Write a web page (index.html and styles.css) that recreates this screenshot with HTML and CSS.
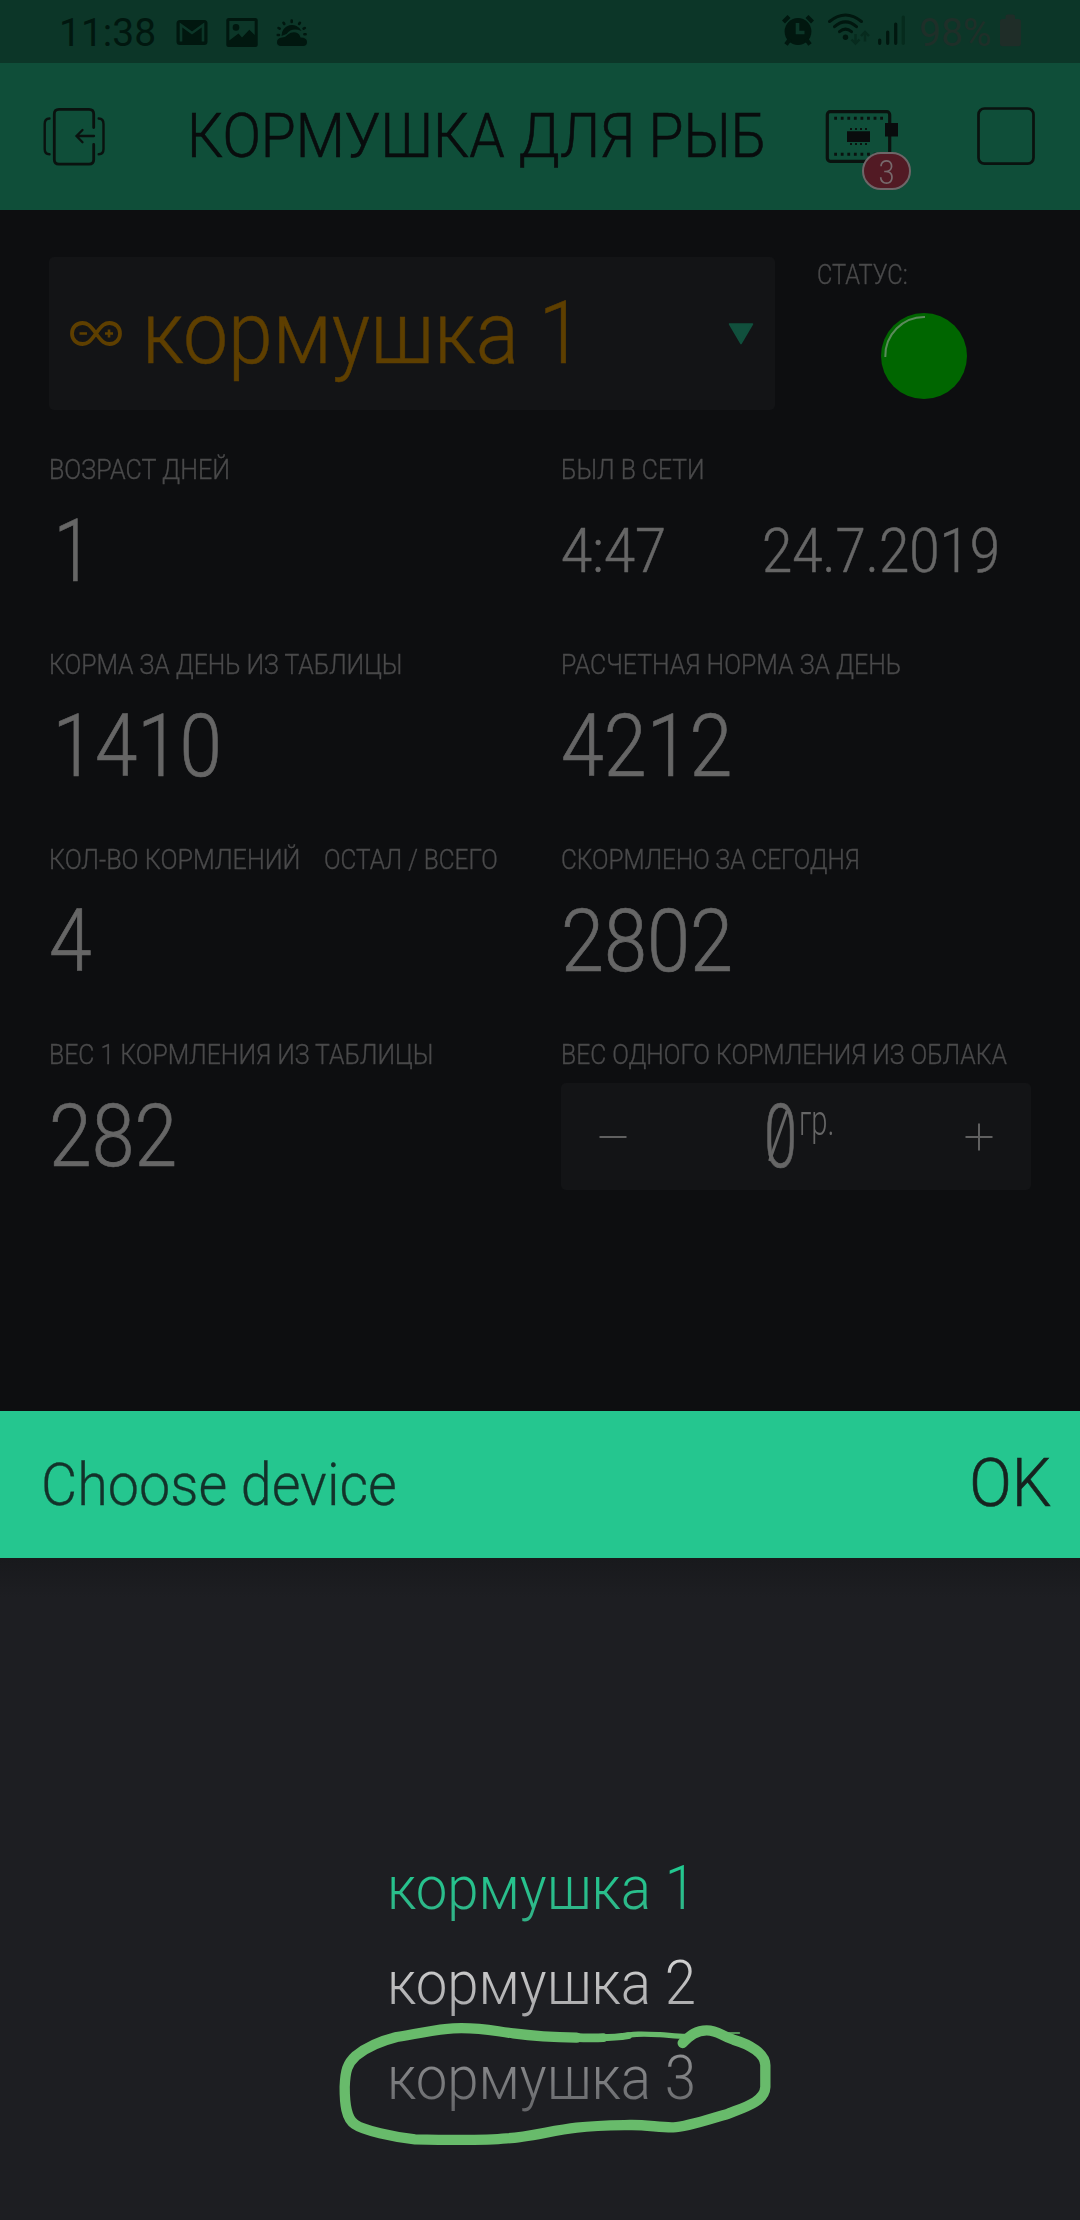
FILE: index.html
```html
<!DOCTYPE html>
<html lang="ru">
<head>
<meta charset="utf-8">
<title>Кормушка для рыб</title>
<link rel="stylesheet" href="styles.css">
</head>
<body>
<div class="screen">
  <header class="status-bar">
    <span class="clock fit">11:38</span>
    <div class="notifications">
      <svg width="32" height="63" viewBox="176 0 32 63">
        <rect x="176.5" y="20" width="31" height="25" rx="3.5" fill="#01170f"/>
        <path d="M181 41.500V25L192 33L203 25V41.500" fill="none" stroke="#0c3628" stroke-width="2.600"/>
      </svg>
      <svg width="32" height="63" viewBox="226 0 32 63">
        <rect x="226.300" y="18" width="31.400" height="29" rx="2.500" fill="#01170f"/>
        <path d="M229.300 21H254.700V35L249.300 29.800L242 37.500L238.500 33.500L229.300 40.500Z" fill="#0c3628"/>
        <circle cx="236" cy="27.400" r="3.300" fill="#01170f"/>
      </svg>
      <svg width="32" height="63" viewBox="276 0 32 63">
        <g fill="none" stroke="#01170f" stroke-width="2.600" stroke-linecap="round">
          <path d="M291.700 20.500V22M283.500 22.800L284.300 24M299.900 22.800L299.100 24M278.500 28L279.700 28.700M304.800 28L303.600 28.700M277.800 35H279M305.600 34.300H304.400"/>
        </g>
        <path d="M281.500 36A10.500 10.500 0 0 1 301.500 31Q292 27 286.500 34Q284 35 281.500 36Z" fill="#01170f"/>
        <path d="M281 46Q277 46 277 42.200Q277 38 282 37.500Q286 37 288 34.500Q291.500 31.500 296 32.500Q299.500 33.500 300.500 37.500Q307 37.500 307 42Q307 46 303 46Z" fill="#01170f" stroke="#0c3628" stroke-width="1.500" paint-order="stroke"/>
      </svg>
    </div>
    <div class="system">
      <svg width="33" height="63" viewBox="782 0 33 63">
        <circle cx="798" cy="33.500" r="13.400" fill="#01170f"/>
        <path d="M783.500 24L789 18.500M812.500 24L807 18.500M790 41L786 46.500M806 41L810 46.500" stroke="#01170f" stroke-width="4.200"/>
        <path d="M797.500 25V34.500H804.500" fill="none" stroke="#0c3628" stroke-width="3.600"/>
      </svg>
      <svg width="43" height="63" viewBox="827 0 43 63">
        <g fill="none" stroke="#01170f" stroke-width="3" stroke-linecap="round">
          <path d="M829.500 23.500Q845.500 10.500 861.500 23.500M834.500 28.700Q845.500 19 856.500 28.700M839.500 33.700Q845.500 28.500 851.500 33.700"/>
        </g>
        <circle cx="845.500" cy="39.300" r="2.700" fill="#01170f"/>
        <path d="M855.500 36V45.500M851.500 41.500L855.500 45.500L859.500 41.500M865 43.500V34M861 38L865 34L869 38" fill="none" stroke="#072b1e" stroke-width="2.400"/>
      </svg>
      <svg width="27" height="63" viewBox="878 0 27 63">
        <g stroke="#01170f" stroke-width="3.200" stroke-linecap="round"><path d="M879.700 42V45.300M887.700 34V45.300M895.700 26V45.300"/><path d="M903.300 19V45.300" stroke="#062b1d"/></g>
      </svg>
      <span class="battery-level fit">98%</span>
      <svg width="21" height="63" viewBox="1000 0 21 63">
        <path d="M1005.500 21V18.500Q1005.500 16.500 1007.500 16.500H1013Q1015 16.500 1015 18.500V21H1018.500Q1021 21 1021 23.500V46Q1021 48.300 1018.500 48.300H1002.500Q1000 48.300 1000 46V23.500Q1000 21 1002.500 21Z" fill="#1f2d28"/>
      </svg>
    </div>
  </header>

  <div class="app-bar">
    <svg width="62" height="147" viewBox="43 63 62 147" fill="none" stroke="#0a120f" stroke-width="2.800" stroke-linecap="round">
      <path d="M93.700 127.500V114Q93.700 109.300 89 109.300H59Q54.300 109.300 54.300 114V159.500Q54.300 164.200 59 164.200H89Q93.700 164.200 93.700 159.500V144.500"/>
      <path stroke-width="2.300" d="M94 136H77M82.500 130L76.500 136L82.500 142.200"/>
      <path stroke-width="2.400" d="M49.500 118.500Q44.700 118.500 44.700 124V149Q44.700 154.300 49.500 154.300M98.700 118.500Q103.500 118.500 103.500 124V149Q103.500 154.300 98.700 154.300"/>
    </svg>
    <h1 class="title"><span class="fit">КОРМУШКА ДЛЯ РЫБ</span></h1>
    <div class="devices">
      <svg width="74" height="147" viewBox="825 63 74 147">
        <rect x="827.300" y="111.700" width="62.400" height="49.600" rx="3" fill="none" stroke="#0a120f" stroke-width="3.200"/>
        <path d="M834.200 118.300H884M834.200 154.300H884" stroke="#0a120f" stroke-width="3" stroke-dasharray="2.800 3.770"/>
        <path d="M850 129H869M850 144H869" stroke="#0a120f" stroke-width="2.200" stroke-dasharray="2 3"/>
        <path d="M847 131.300H870V142H847ZM885 123H898V136.500H885Z" fill="#090c0d"/>
      </svg>
      <span class="badge"><span class="fit">3</span></span>
    </div>
    <svg class="stop" width="58" height="147" viewBox="977 63 58 147">
      <rect x="978.500" y="108.500" width="55" height="55.200" rx="6" fill="none" stroke="#0a120f" stroke-width="2.700"/>
    </svg>
  </div>

  <main class="dashboard">
    <div class="top-row">
      <div class="device-select">
        <svg width="52" height="30" viewBox="70 319 52 30" fill="none" stroke="#5e3f00">
          <path stroke-width="3.800" d="M96 333.500C90 325 87 323 82.500 323C76 323 72 327.800 72 333.500S76 344 82.500 344C87 344 90 342 96 333.500C102 325 105 323 109.500 323C116 323 120 327.800 120 333.500S116 344 109.500 344C105 344 102 342 96 333.500Z"/>
          <path stroke-width="2.600" d="M79.500 333.500H87M105 333.500H113M109 329.500V337.500"/>
        </svg>
        <span class="device-name fit">кормушка 1</span>
        <svg width="26" height="22" viewBox="0 0 26 22"><path d="M1.500 1H24.500L13 20.500Z" fill="#11503d" stroke="#11503d" stroke-width="1.500" stroke-linejoin="round"/></svg>
      </div>
      <div class="state">
        <span class="label fit">СТАТУС:</span>
        <svg width="88" height="88" viewBox="0 0 88 88">
          <circle cx="44" cy="44" r="43" fill="#060"/>
          <path d="M5.300 45A39 39 0 0 1 45 5" fill="none" stroke="#5b8a5b" stroke-width="2"/>
        </svg>
      </div>
    </div>

    <div class="metrics">
      <section class="metric age"><div class="label fit">ВОЗРАСТ ДНЕЙ</div><div class="value fit">1</div></section>
      <section class="metric seen"><div class="label fit">БЫЛ В СЕТИ</div><div class="moment"><span class="time fit">4:47</span><span class="date fit">24.7.2019</span></div></section>
      <section class="metric table-feed"><div class="label fit">КОРМА ЗА ДЕНЬ ИЗ ТАБЛИЦЫ</div><div class="value fit">1410</div></section>
      <section class="metric norm"><div class="label fit">РАСЧЕТНАЯ НОРМА ЗА ДЕНЬ</div><div class="value fit">4212</div></section>
      <section class="metric count"><div class="label-pair"><span class="label fit">КОЛ-ВО КОРМЛЕНИЙ</span><span class="label left-total fit">ОСТАЛ / ВСЕГО</span></div><div class="value fit">4</div></section>
      <section class="metric fed"><div class="label fit">СКОРМЛЕНО ЗА СЕГОДНЯ</div><div class="value fit">2802</div></section>
      <section class="metric weight"><div class="label fit">ВЕС 1 КОРМЛЕНИЯ ИЗ ТАБЛИЦЫ</div><div class="value fit">282</div></section>
      <section class="metric cloud"><div class="label fit">ВЕС ОДНОГО КОРМЛЕНИЯ ИЗ ОБЛАКА</div>
        <div class="stepper">
          <svg width="28" height="28" viewBox="0 0 28 28"><path d="M.5 14H27.500" stroke="#606060" stroke-width="2"/></svg>
          <div class="amount"><span class="zero"><span class="fit">0</span><svg width="28" height="66" viewBox="0 0 28 66"><path d="M5.500 58L23 8" stroke="#666" stroke-width="2.800"/></svg></span><span class="unit fit">гр.</span></div>
          <svg width="28" height="28" viewBox="0 0 28 28"><path d="M.5 14H27.500M14 .5V27.500" stroke="#606060" stroke-width="2"/></svg>
        </div>
      </section>
    </div>
  </main>

  <section class="sheet">
    <div class="sheet-bar"><span class="prompt fit">Choose device</span><span class="ok fit">OK</span></div>
    <div class="options">
      <div class="option selected"><span class="fit">кормушка 1</span></div>
      <div class="option near"><span class="fit">кормушка 2</span></div>
      <div class="option far"><span class="fit">кормушка 3</span></div>
      <svg class="marker" width="480" height="160" viewBox="0 560 1440 480" fill="none" stroke="#68bb6b" stroke-linecap="round" stroke-linejoin="round">
        <path stroke-width="31" d="M1088 668C1110 645 1130 630 1160 630C1195 630 1200 645 1240 658C1290 672 1336 700 1336 735V800C1334 845 1270 862 1225 880C1175 894 1100 920 1060 921C1020 922 980 913 930 914C870 915 830 915 770 922C700 930 620 951 560 954C500 960 380 959 285 957C220 950 130 930 105 912C78 895 74 850 74 800C76 750 82 730 108 706C140 680 190 660 230 650C300 640 350 626 400 624C480 620 520 632 580 639C650 648 720 651 770 652"/>
        <path stroke-width="26" d="M760 651C800 653 820 653 850 652"/>
        <path stroke-width="21" d="M840 652C870 652 900 650 925 646"/>
        <path stroke-width="16" d="M905 650C930 638 980 641 1020 643C1050 645 1080 649 1105 648"/>
        <path stroke-width="5" d="M1200 638H1258"/>
      </svg>
    </div>
  </section>
</div>
</body>
</html>
```
FILE: styles.css
```css
* { box-sizing: border-box; }

body {
  margin: 0;
  background: #0d0e10;
  font-family: Roboto, "Liberation Sans", sans-serif;
  font-weight: 300;
}

.screen {
  width: 1080px;
  height: 2220px;
  display: flex;
  flex-direction: column;
  overflow: hidden;
}

svg { display: block; flex: none; }

/* Narrows a run of text horizontally by --sx, from its left edge */
.fit {
  display: block;
  flex: none;
  width: max-content;
  white-space: nowrap;
  transform: scaleX(var(--sx, 0.885));
  transform-origin: left center;
}

.status-bar {
  height: 63px;
  flex: none;
  display: flex;
  align-items: center;
  padding: 0 59px;
  background: #0c3628;
  color: #01170f;
  font-size: 39px;
  line-height: 63px;
}
.clock { --sx: 1; width: 117px; padding-top: 4px; font-weight: 400; }
.notifications { display: flex; gap: 18px; }
.system { display: flex; margin-left: auto; }
.system svg:nth-of-type(2) { margin-left: 12px; }
.system svg:nth-of-type(3) { margin-left: 8px; }
.battery-level { --sx: 1; width: 81px; margin-left: 14px; padding-top: 4px; color: #1f2f29; font-weight: 400; }

.app-bar {
  height: 147px;
  flex: none;
  display: flex;
  align-items: center;
  padding: 0 45px 0 43px;
  background: #0f4e39;
  color: #090c0d;
}
.title {
  flex: 1;
  margin: 0 0 0 82px;
  font-size: 60.5px;
  font-weight: 300;
  line-height: 147px;
  -webkit-text-stroke: 0.6px;
}
.title .fit { --sx: 0.938; }
.devices { position: relative; }
.badge {
  position: absolute;
  left: 37px;
  top: 89px;
  width: 49px;
  height: 38px;
  display: flex;
  justify-content: center;
  border: 2px solid #6e6668;
  border-radius: 19px;
  background: #521a24;
  color: #77696c;
  font-size: 34px;
  line-height: 37px;
}
.badge .fit { --sx: 0.85; transform-origin: center; }
.stop { margin-left: 78px; }

.dashboard { height: 1201px; flex: none; padding: 47px 0 0 49px; background: #0d0e10; }
.top-row { display: flex; height: 183px; }
.device-select {
  width: 726px;
  height: 153px;
  display: flex;
  align-items: center;
  padding: 0 21px;
  border-radius: 5px;
  background: #131416;
  color: #5e3f00;
}
.device-name { --sx: 0.926; flex: 1; margin-left: 20px; font-size: 87px; line-height: 153px; font-weight: 300; -webkit-text-stroke: 0.5px; }
.state { margin-left: 42px; padding-top: 4px; }
.label { height: 28px; color: #4a4a4b; font-size: 28px; line-height: 28px; -webkit-text-stroke: 0.35px; }
.state .label { --sx: 0.845; }
.state svg { margin: 23px 0 0 63px; }

.metrics { display: grid; grid-template-columns: 512px 470px; grid-auto-rows: 195px; }
.metric .label { height: 58px; line-height: 60px; }
.label-pair { display: flex; }
.label-pair .label:first-child { width: 275px; }
.value, .moment { color: #666; line-height: 106px; -webkit-text-stroke: 0.7px; }
.value { font-size: 87px; }
.moment { display: flex; font-size: 60.5px; line-height: 107px; -webkit-text-stroke: 0.5px; }
.time { width: 201px; }

.age { --sx: 0.895; }
.age .value { --sx: 0.8; padding-left: 6px; }
.seen { --sx: 0.882; }
.time { --sx: 0.928; }
.date { --sx: 0.902; }
.table-feed { --sx: 0.884; }
.table-feed .value { padding-left: 4px; --sx: 0.878; }
.norm { --sx: 0.888; }
.count .label { --sx: 0.898; }
.count .left-total { --sx: 0.871; }
.fed { --sx: 0.871; }
.fed .value { --sx: 0.891; }
.weight { --sx: 0.885; }
.cloud { --sx: 0.881; }

.stepper {
  height: 107px;
  display: flex;
  align-items: center;
  justify-content: space-between;
  padding: 0 38px;
  border-radius: 5px;
  background: #131416;
  color: #666;
}
.amount { display: flex; align-items: flex-start; width: 202px; height: 107px; padding-left: 69px; }
.zero { position: relative; width: 35px; font-size: 89px; line-height: 107px; -webkit-text-stroke: 0.7px; }
.zero .fit { --sx: 0.67; }
.zero svg { position: absolute; left: 0; top: 20px; }
.unit { --sx: 0.68; font-size: 43px; line-height: 74px; }

.sheet { flex: 1; display: flex; flex-direction: column; background: #1d1e22; }
.sheet-bar {
  height: 147px;
  flex: none;
  display: flex;
  justify-content: space-between;
  padding: 0 29px 0 41px;
  background: #25c68f;
  color: #13322a;
  font-size: 60px;
  line-height: 147px;
  -webkit-text-stroke: 0.3px;
}
.prompt { --sx: 0.928; }
.ok { --sx: 0.95; color: #16231f; font-size: 66px; line-height: 146px; transform-origin: right center; -webkit-text-stroke: 0.6px; }

.options {
  position: relative;
  flex: 1;
  padding-top: 282px;
  background: linear-gradient(#18191c, #1d1e22 40px);
}
.option { height: 95px; padding-left: 387px; font-size: 62px; line-height: 95px; color: transparent; }
.option .fit { --sx: 0.91; background-clip: text; -webkit-background-clip: text; }
.selected .fit { background-image: linear-gradient(#22c990 30%, #32b186 85%); }
.near .fit { background-image: linear-gradient(#d2d2d2 25%, #a4a4a6 85%); }
.far .fit { background-image: linear-gradient(#8f9092 25%, #656669 85%); }
.marker { position: absolute; left: 320px; top: 449px; }
```
